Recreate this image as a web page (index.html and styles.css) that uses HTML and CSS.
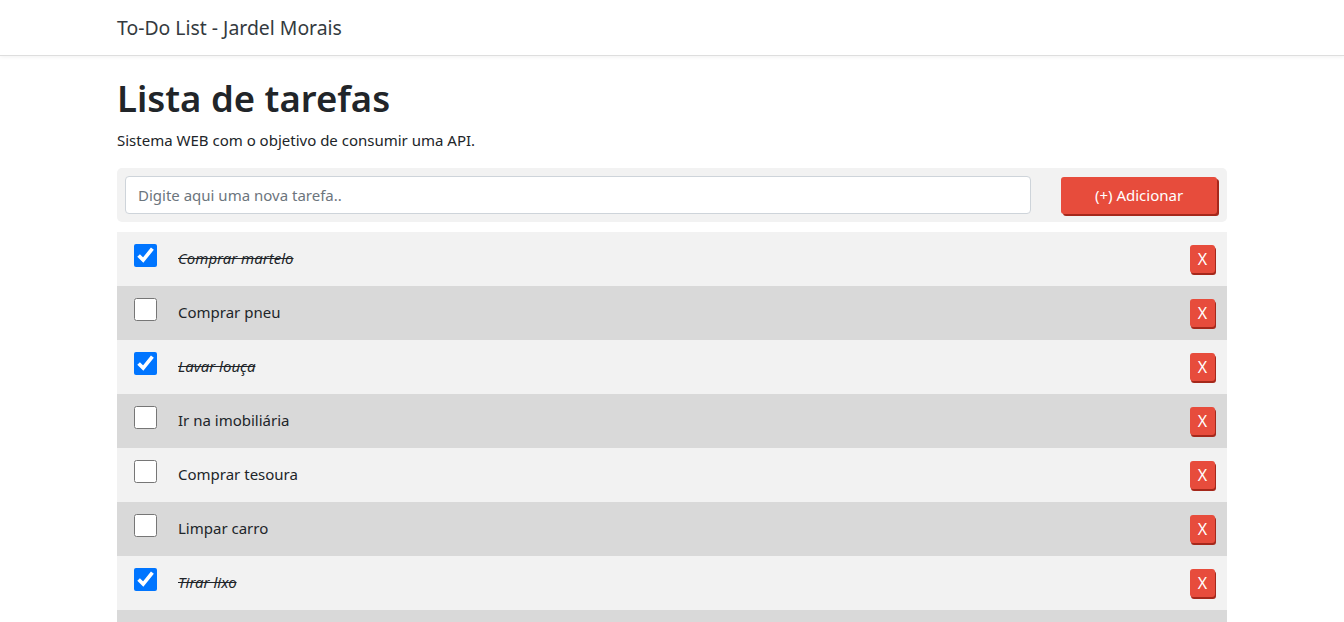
FILE: index.html
```html
<!DOCTYPE html>
<html lang="pt">
<head>
<meta charset="utf-8">
<title>To-Do List</title>
<link rel="stylesheet" href="styles.css">
</head>
<body>
<nav class="navbar">
  <div class="container">
    <span class="brand">To-Do List - Jardel Morais</span>
  </div>
</nav>
<main class="container">
  <h1 class="title">Lista de tarefas</h1>
  <p class="subtitle">Sistema WEB com o objetivo de consumir uma API.</p>
  <div class="add-bar">
    <input class="task-input" type="text" placeholder="Digite aqui uma nova tarefa..">
    <button class="btn-add">(+) Adicionar</button>
  </div>
  <ul class="tasks">
    <li class="task"><input type="checkbox" class="check" checked><span class="label done">Comprar martelo</span><button class="btn-del">X</button></li>
    <li class="task"><input type="checkbox" class="check"><span class="label">Comprar pneu</span><button class="btn-del">X</button></li>
    <li class="task"><input type="checkbox" class="check" checked><span class="label done">Lavar louça</span><button class="btn-del">X</button></li>
    <li class="task"><input type="checkbox" class="check"><span class="label">Ir na imobiliária</span><button class="btn-del">X</button></li>
    <li class="task"><input type="checkbox" class="check"><span class="label">Comprar tesoura</span><button class="btn-del">X</button></li>
    <li class="task"><input type="checkbox" class="check"><span class="label">Limpar carro</span><button class="btn-del">X</button></li>
    <li class="task"><input type="checkbox" class="check" checked><span class="label done">Tirar lixo</span><button class="btn-del">X</button></li>
    <li class="task"><input type="checkbox" class="check"><span class="label">Comprar pão</span><button class="btn-del">X</button></li>
  </ul>
</main>
</body>
</html>
```
FILE: styles.css
```css
* { box-sizing: border-box; }
body {
  margin: 0;
  font-family: "Noto Sans", "Open Sans", sans-serif;
  color: #212529;
  background: #fff;
  font-size: 15px;
}
.container {
  width: 1110px;
  margin: 0 auto;
}
.navbar {
  height: 56px;
  border-bottom: 1px solid #dedede;
  box-shadow: 0 1px 4px rgba(0,0,0,0.06);
  display: flex;
  align-items: center;
}
.brand {
  font-size: 19.4px;
  color: #343a40;
}
.title {
  margin: 19px 0 0;
  font-size: 36.5px;
  font-weight: 600;
  line-height: 46px;
}
.subtitle {
  margin: 8px 0 0;
  font-size: 15px;
  line-height: 22px;
}
.add-bar {
  margin-top: 17px;
  background: #f2f2f2;
  border-radius: 5px;
  padding: 8px 10px 8px 8px;
  display: flex;
  gap: 30px;
  align-items: center;
}
.task-input {
  flex: 1;
  height: 38px;
  border: 1px solid #ced4da;
  border-radius: 4px;
  padding: 0 12px;
  font-family: inherit;
  font-size: 15px;
  color: #495057;
}
.task-input::placeholder { color: #6c757d; }
.btn-add {
  width: 156px;
  height: 37px;
  background: #e74c3c;
  color: #fff;
  border: none;
  border-radius: 3px;
  box-shadow: 2px 2px 0 #a5281b;
  font-family: inherit;
  font-size: 15px;
}
.tasks {
  list-style: none;
  margin: 10px 0 0;
  padding: 0;
}
.task {
  height: 54px;
  display: flex;
  align-items: center;
  padding: 0 12px 0 17px;
  background: #f2f2f2;
}
.task:nth-child(even) { background: #d9d9d9; }
.check {
  width: 23px;
  height: 23px;
  margin: 0 0 7px;
}
.label {
  margin-left: 21px;
  padding-bottom: 3px;
  flex: 1;
  font-size: 15px;
  color: #212529;
}
.label.done {
  text-decoration: line-through;
  font-style: italic;
}
.btn-del {
  width: 25px;
  height: 28px;
  padding: 0;
  background: #e74c3c;
  color: #fff;
  border: none;
  border-radius: 3px;
  box-shadow: 1px 2px 0 #a5281b;
  font-family: inherit;
  font-size: 16px;
  margin-top: 0;
}
```
